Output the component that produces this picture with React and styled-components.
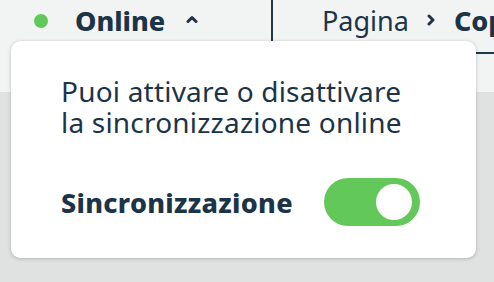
import React from "react";
import styled, { createGlobalStyle } from "styled-components";

const Global = createGlobalStyle`
  html, body { margin: 0; padding: 0; }
  body {
    width: 494px; height: 282px; overflow: hidden;
    background: #dfe2e1;
    font-family: "Noto Sans", "Open Sans", sans-serif;
    color: #1b3447;
  }
`;

const Page = styled.div`
  position: relative;
  width: 494px;
  height: 282px;
  overflow: hidden;
`;

const Header = styled.header`
  height: 92px;
  background: #f2f4f4;
  display: flex;
  align-items: flex-start;
`;

const Status = styled.div`
  flex: 0 0 271px;
  height: 41px;
  display: flex;
  align-items: center;
  padding-left: 34px;
  box-sizing: border-box;
`;

const Dot = styled.span`
  width: 14px;
  height: 14px;
  border-radius: 50%;
  background: #62c85a;
  margin-right: 27px;
`;

const StatusLabel = styled.span`
  font-size: 27px;
  font-weight: 800;
`;

const Caret = styled.svg`
  margin-left: 21px;
  margin-top: -4px;
`;

const Divider = styled.div`
  flex: 0 0 2px;
  height: 92px;
  background: #1d3a4a;
`;

const Crumbs = styled.nav`
  flex: 0 0 auto;
  display: flex;
  align-items: flex-start;
  padding: 2px 0 0 49px;
  white-space: nowrap;
`;

const Crumb = styled.span`
  font-size: 27px;
  line-height: 37px;
  font-weight: ${(p) => (p.$active ? 800 : 400)};
  border-bottom: 2px solid ${(p) => (p.$active ? "#1d3a4a" : "transparent")};
  padding-bottom: 13px;
`;

const Chevron = styled.svg`
  margin: 12px 19px 0 18px;
`;

const Popover = styled.div`
  position: absolute;
  left: 11px;
  top: 41px;
  width: 465px;
  height: 217px;
  box-sizing: border-box;
  background: #fff;
  border-radius: 9px;
  box-shadow: 0 1px 4px rgba(0, 0, 0, 0.18), 0 0 1px rgba(0, 0, 0, 0.2);
  padding: 35px 50px 0 50px;
`;

const Description = styled.p`
  margin: 0;
  font-size: 28px;
  line-height: 31px;
  letter-spacing: 0.2px;
  font-weight: 400;
`;

const Row = styled.div`
  margin-top: 40px;
  display: flex;
  align-items: center;
  gap: 31px;
`;

const RowLabel = styled.span`
  font-size: 27px;
  font-weight: 800;
  letter-spacing: 0.3px;
`;

const Switch = styled.button`
  width: 96px;
  height: 48px;
  border: none;
  border-radius: 24px;
  background: ${(p) => (p.$on ? "#62c85a" : "#c9cfd2")};
  padding: 0 8px;
  display: flex;
  align-items: center;
  justify-content: ${(p) => (p.$on ? "flex-end" : "flex-start")};
  cursor: pointer;
`;

const Knob = styled.span`
  width: 36px;
  height: 36px;
  border-radius: 50%;
  background: #fff;
`;

export default function App() {
  return (
    <Page>
      <Global />
      <Header>
        <Status>
          <Dot />
          <StatusLabel>Online</StatusLabel>
          <Caret width="12" height="8" viewBox="0 0 12 8">
            <path d="M2 6.5 L6 2.5 L10 6.5" fill="none" stroke="#1b3447" strokeWidth="3" strokeLinecap="round" strokeLinejoin="round" />
          </Caret>
        </Status>
        <Divider />
        <Crumbs>
          <Crumb>Pagina</Crumb>
          <Chevron width="8" height="12" viewBox="0 0 8 12">
            <path d="M2 2 L6 6 L2 10" fill="none" stroke="#1b3447" strokeWidth="3" strokeLinecap="round" strokeLinejoin="round" />
          </Chevron>
          <Crumb $active>Copia</Crumb>
        </Crumbs>
      </Header>
      <Popover>
        <Description>
          Puoi attivare o disattivare
          <br />
          la sincronizzazione online
        </Description>
        <Row>
          <RowLabel>Sincronizzazione</RowLabel>
          <Switch $on aria-label="Sincronizzazione">
            <Knob />
          </Switch>
        </Row>
      </Popover>
    </Page>
  );
}
